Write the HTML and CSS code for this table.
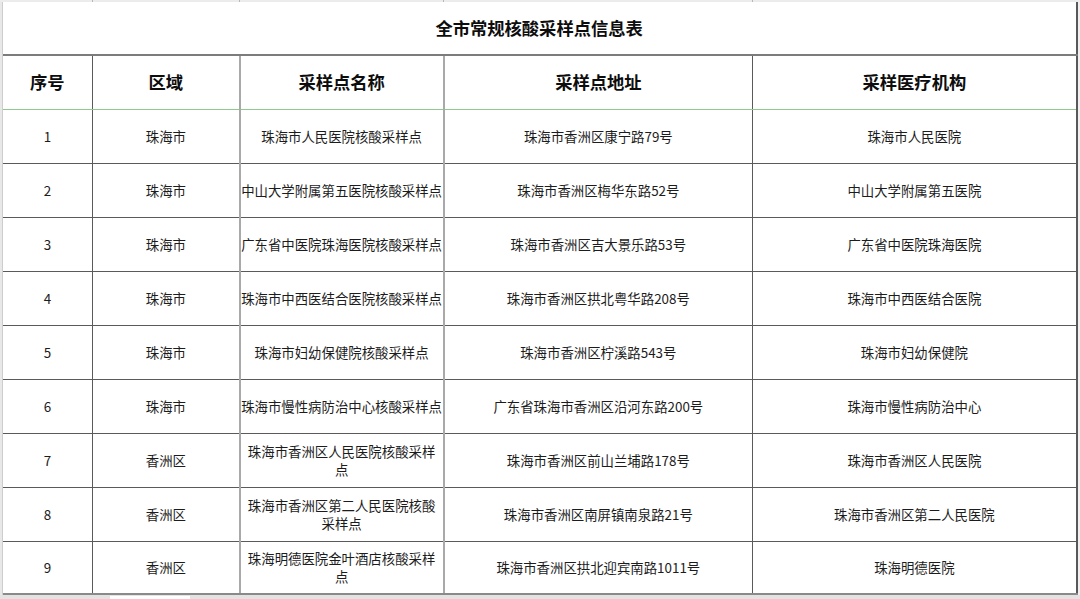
FILE: index.html
```html
<!DOCTYPE html>
<html lang="zh-CN">
<head>
<meta charset="utf-8">
<title>全市常规核酸采样点信息表</title>
<link rel="stylesheet" href="styles.css">
</head>
<body>
<div class="top-strip">
  <span class="tick t1"></span><span class="tick t2"></span><span class="tick t3"></span><span class="tick t4"></span><span class="tick t5"></span>
</div>
<div class="sheet">
  <div class="edge-left"></div>
  <table class="grid">
    <colgroup>
      <col class="c1"><col class="c2"><col class="c3"><col class="c4"><col class="c5">
    </colgroup>
    <tr class="title-row"><td colspan="5" class="title">全市常规核酸采样点信息表</td></tr>
    <tr class="head-row">
      <th>序号</th><th>区域</th><th class="col3">采样点名称</th><th class="col4">采样点地址</th><th class="col5">采样医疗机构</th>
    </tr>
    <tr class="first-row"><td>1</td><td>珠海市</td><td class="col3">珠海市人民医院核酸采样点</td><td class="col4">珠海市香洲区康宁路79号</td><td class="col5">珠海市人民医院</td></tr>
    <tr><td>2</td><td>珠海市</td><td class="col3"><span class="over">中山大学附属第五医院核酸采样点</span></td><td class="col4">珠海市香洲区梅华东路52号</td><td class="col5">中山大学附属第五医院</td></tr>
    <tr><td>3</td><td>珠海市</td><td class="col3"><span class="over">广东省中医院珠海医院核酸采样点</span></td><td class="col4">珠海市香洲区吉大景乐路53号</td><td class="col5">广东省中医院珠海医院</td></tr>
    <tr><td>4</td><td>珠海市</td><td class="col3"><span class="over">珠海市中西医结合医院核酸采样点</span></td><td class="col4">珠海市香洲区拱北粤华路208号</td><td class="col5">珠海市中西医结合医院</td></tr>
    <tr><td>5</td><td>珠海市</td><td class="col3">珠海市妇幼保健院核酸采样点</td><td class="col4">珠海市香洲区柠溪路543号</td><td class="col5">珠海市妇幼保健院</td></tr>
    <tr><td>6</td><td>珠海市</td><td class="col3"><span class="over">珠海市慢性病防治中心核酸采样点</span></td><td class="col4">广东省珠海市香洲区沿河东路200号</td><td class="col5">珠海市慢性病防治中心</td></tr>
    <tr><td>7</td><td>香洲区</td><td class="col3"><span class="wrap">珠海市香洲区人民医院核酸采样点</span></td><td class="col4">珠海市香洲区前山兰埔路178号</td><td class="col5">珠海市香洲区人民医院</td></tr>
    <tr><td>8</td><td>香洲区</td><td class="col3"><span class="wrap">珠海市香洲区第二人民医院核酸采样点</span></td><td class="col4">珠海市香洲区南屏镇南泉路21号</td><td class="col5">珠海市香洲区第二人民医院</td></tr>
    <tr class="last-row"><td>9</td><td>香洲区</td><td class="col3"><span class="wrap">珠海明德医院金叶酒店核酸采样点</span></td><td class="col4">珠海市香洲区拱北迎宾南路1011号</td><td class="col5">珠海明德医院</td></tr>
  </table>
  <div class="edge-right"></div>
</div>
<div class="bottom-bar"><span class="sheet-tab"></span></div>
</body>
</html>
```

FILE: styles.css
```css
html, body {
  margin: 0;
  padding: 0;
  background: #ffffff;
}

body {
  width: 1080px;
  height: 599px;
  overflow: hidden;
  font-family: "Noto Sans CJK SC", "Noto Sans", sans-serif;
}

.top-strip {
  height: 2px;
  background: #ececec;
  display: flex;
  padding-left: 3px;
}

.tick {
  display: block;
  height: 2px;
  border-right: 1px solid #b8b8b8;
  box-sizing: border-box;
}
.t1 { width: 90px; }
.t2 { width: 147px; }
.t3 { width: 204px; }
.t4 { width: 309px; }
.t5 { width: 324px; border-right: none; }

.sheet {
  display: flex;
  align-items: stretch;
}

.edge-left {
  width: 2px;
  background: #e8e8e8;
  border-right: 1px solid #cdcdcd;
}

.edge-right {
  width: 3px;
  background: #f0f0f0;
}

.grid {
  border-collapse: collapse;
  table-layout: fixed;
  width: 1074px;
}

.c1 { width: 90px; }
.c2 { width: 147px; }
.c3 { width: 204px; }
.c4 { width: 309px; }
.c5 { width: 324px; }

.grid td,
.grid th {
  border: 1px solid #5a5a5a;
  padding: 0;
  text-align: center;
  vertical-align: middle;
  height: 54px;
  box-sizing: border-box;
  font-size: 13.4px;
  font-weight: 400;
  color: #1c1c1c;
  line-height: 18px;
}

.grid td:first-child,
.grid th:first-child {
  border-left: none;
}

.grid td.col3,
.grid th.col3 {
  border-left: 2px solid #a9a9a9;
}

.grid td.col4,
.grid th.col4 {
  border-left: 2px solid #a9a9a9;
}

.grid td.col5,
.grid th.col5 {
  border-right: 2px solid #585858;
}

.title-row td.title {
  height: 53px;
  border-top: none;
  border-left: none;
  border-right: 2px solid #585858;
  border-bottom: 2px solid #7c7c7c;
  font-size: 17.3px;
  font-weight: 700;
  color: #0d0d0d;
}

.head-row th {
  font-size: 17.3px;
  font-weight: 700;
  color: #0d0d0d;
  border-bottom: 1px solid #8fc98f;
}

.first-row td {
  border-top: 1px solid #8fc98f;
}

.over {
  white-space: nowrap;
  display: inline-block;
  margin: 0 -6px;
}

.wrap {
  display: inline-block;
  width: 190px;
}

.last-row td {
  height: 53px;
  border-bottom: 2px solid #8a8a8a;
}

.bottom-bar {
  height: 5px;
  background: #e3e3e3;
  position: relative;
}

.sheet-tab {
  position: absolute;
  left: 110px;
  top: 1px;
  width: 80px;
  height: 4px;
  background: #ffffff;
}
```
